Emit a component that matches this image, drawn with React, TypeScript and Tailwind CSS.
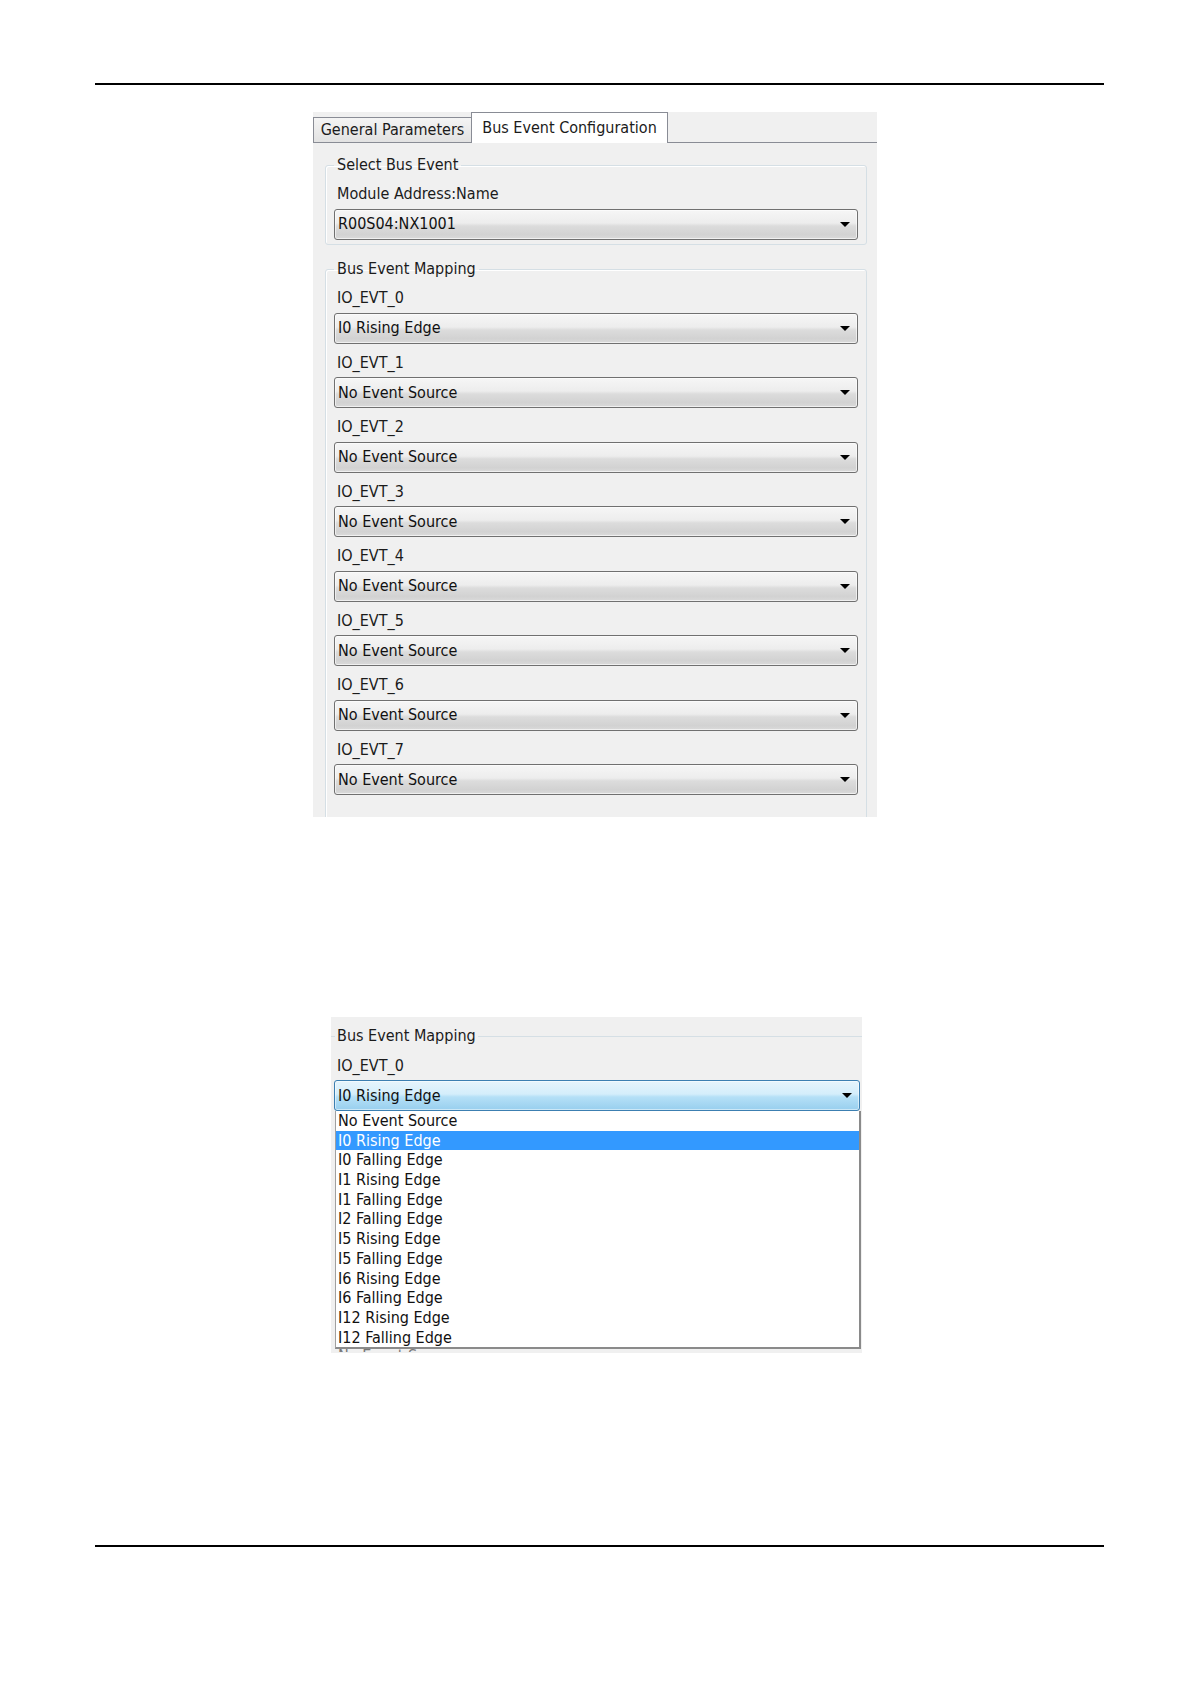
import React from "react";

const rows = [
  "I0 Rising Edge",
  "No Event Source",
  "No Event Source",
  "No Event Source",
  "No Event Source",
  "No Event Source",
  "No Event Source",
  "No Event Source",
];

const options = [
  "No Event Source",
  "I0 Rising Edge",
  "I0 Falling Edge",
  "I1 Rising Edge",
  "I1 Falling Edge",
  "I2 Falling Edge",
  "I5 Rising Edge",
  "I5 Falling Edge",
  "I6 Rising Edge",
  "I6 Falling Edge",
  "I12 Rising Edge",
  "I12 Falling Edge",
];

function Arrow() {
  return (
    <svg width="10" height="5" viewBox="0 0 10 5">
      <path d="M0 0h10L5 5z" fill="#000" />
    </svg>
  );
}

function Combo({ value, active }: { value: string; active?: boolean }) {
  return (
    <div
      className={
        active
          ? "h-[31px] rounded-[3px] border border-[#3c7fb1] bg-[linear-gradient(to_bottom,#e6f4fc_0%,#d4eefb_45%,#b5e0f7_55%,#98cfee_100%)] shadow-[inset_0_0_0_1px_rgba(255,255,255,0.5)] flex items-center justify-between pl-[3px] pr-[7px]"
          : "h-[31px] rounded-[3px] border border-[#707070] bg-[linear-gradient(to_bottom,#f6f6f6_0%,#ededed_45%,#dcdcdc_55%,#d2d2d2_85%,#dadada_100%)] shadow-[inset_0_0_0_1px_rgba(255,255,255,0.6)] flex items-center justify-between pl-[3px] pr-[7px]"
      }
    >
      <span className="leading-[20px] text-[#111]">{value}</span>
      <Arrow />
    </div>
  );
}

function Label({ text }: { text: string }) {
  return <div className="h-[33.5px] pt-[9px] pl-[3px] leading-[20px] text-[#1b1b1b]">{text}</div>;
}

export default function App() {
  return (
    <div className="w-[1191px] h-[1683px] bg-white pt-[83px] text-[16px] font-['DejaVu_Sans_Condensed','DejaVu_Sans',sans-serif]">
      {/* header rule */}
      <div className="ml-[95px] w-[1009px] h-[2px] bg-black" />

      {/* dialog: bus event configuration */}
      <div className="ml-[313px] mt-[27px] w-[564px] h-[705px] bg-[#f0f0f0] overflow-hidden flex flex-col">
        <div className="h-[31px] shrink-0 flex items-end">
          <div className="h-[26px] w-[159px] border border-[#898c95] bg-[linear-gradient(to_bottom,#f4f4f4,#e2e2e2)] flex items-center justify-center text-[#1b1b1b]">
            General Parameters
          </div>
          <div className="h-[31px] w-[197px] -ml-px border border-b-0 border-[#898c95] bg-white flex items-center justify-center text-[#1b1b1b]">
            Bus Event Configuration
          </div>
          <div className="flex-1 h-full border-b border-[#898c95]" />
        </div>

        <div className="pl-[12px] pr-[10px]">
          <fieldset className="mt-[12px] px-[8px] pb-[4px] border border-[#d5dfe5] rounded-[3px] shadow-[inset_1px_1px_0_#fff]">
            <legend className="px-[3px] leading-[20px] text-[#1b1b1b]">Select Bus Event</legend>
            <Label text="Module Address:Name" />
            <Combo value="R00S04:NX1001" />
          </fieldset>

          <fieldset className="mt-[14.5px] px-[8px] pb-[40px] border border-[#d5dfe5] rounded-[3px] shadow-[inset_1px_1px_0_#fff]">
            <legend className="px-[3px] leading-[20px] text-[#1b1b1b]">Bus Event Mapping</legend>
            {rows.map((v, i) => (
              <div key={i}>
                <Label text={`IO_EVT_${i}`} />
                <Combo value={v} />
              </div>
            ))}
          </fieldset>
        </div>
      </div>

      {/* dropdown opened */}
      <div className="ml-[331px] mt-[200px] w-[531px] h-[336px] bg-[#f0f0f0] overflow-hidden pt-[9px]">
        <div className="h-[20px] flex items-center">
          <div className="w-[4px] border-t border-[#d5dfe5]" />
          <span className="px-[2px] leading-[20px] text-[#1b1b1b]">Bus Event Mapping</span>
          <div className="flex-1 border-t border-[#d5dfe5]" />
        </div>
        <div className="h-[34px] pt-[10px] pl-[6px] leading-[20px] text-[#1b1b1b]">IO_EVT_0</div>
        <div className="ml-[3px] w-[526px]">
          <Combo value="I0 Rising Edge" active />
        </div>
        <div className="ml-[4px] w-[526px] bg-white border-l border-r-2 border-b-2 border-l-[#a0a0a0] border-r-[#8a8a8a] border-b-[#8a8a8a]">
          {options.map((o) => (
            <div
              key={o}
              className={
                o === "I0 Rising Edge"
                  ? "h-[19.7px] leading-[19.7px] pl-[2px] bg-[#3399ff] text-white"
                  : "h-[19.7px] leading-[19.7px] pl-[2px] text-[#111]"
              }
            >
              {o}
            </div>
          ))}
        </div>
        <div className="ml-[4px] h-[3px] overflow-hidden">
          <div className="-mt-[3px] pl-[3px] leading-[19.7px] text-[#777]">No Event Source</div>
        </div>
      </div>

      {/* footer rule */}
      <div className="ml-[95px] mt-[192px] w-[1009px] h-[2px] bg-black" />
    </div>
  );
}
